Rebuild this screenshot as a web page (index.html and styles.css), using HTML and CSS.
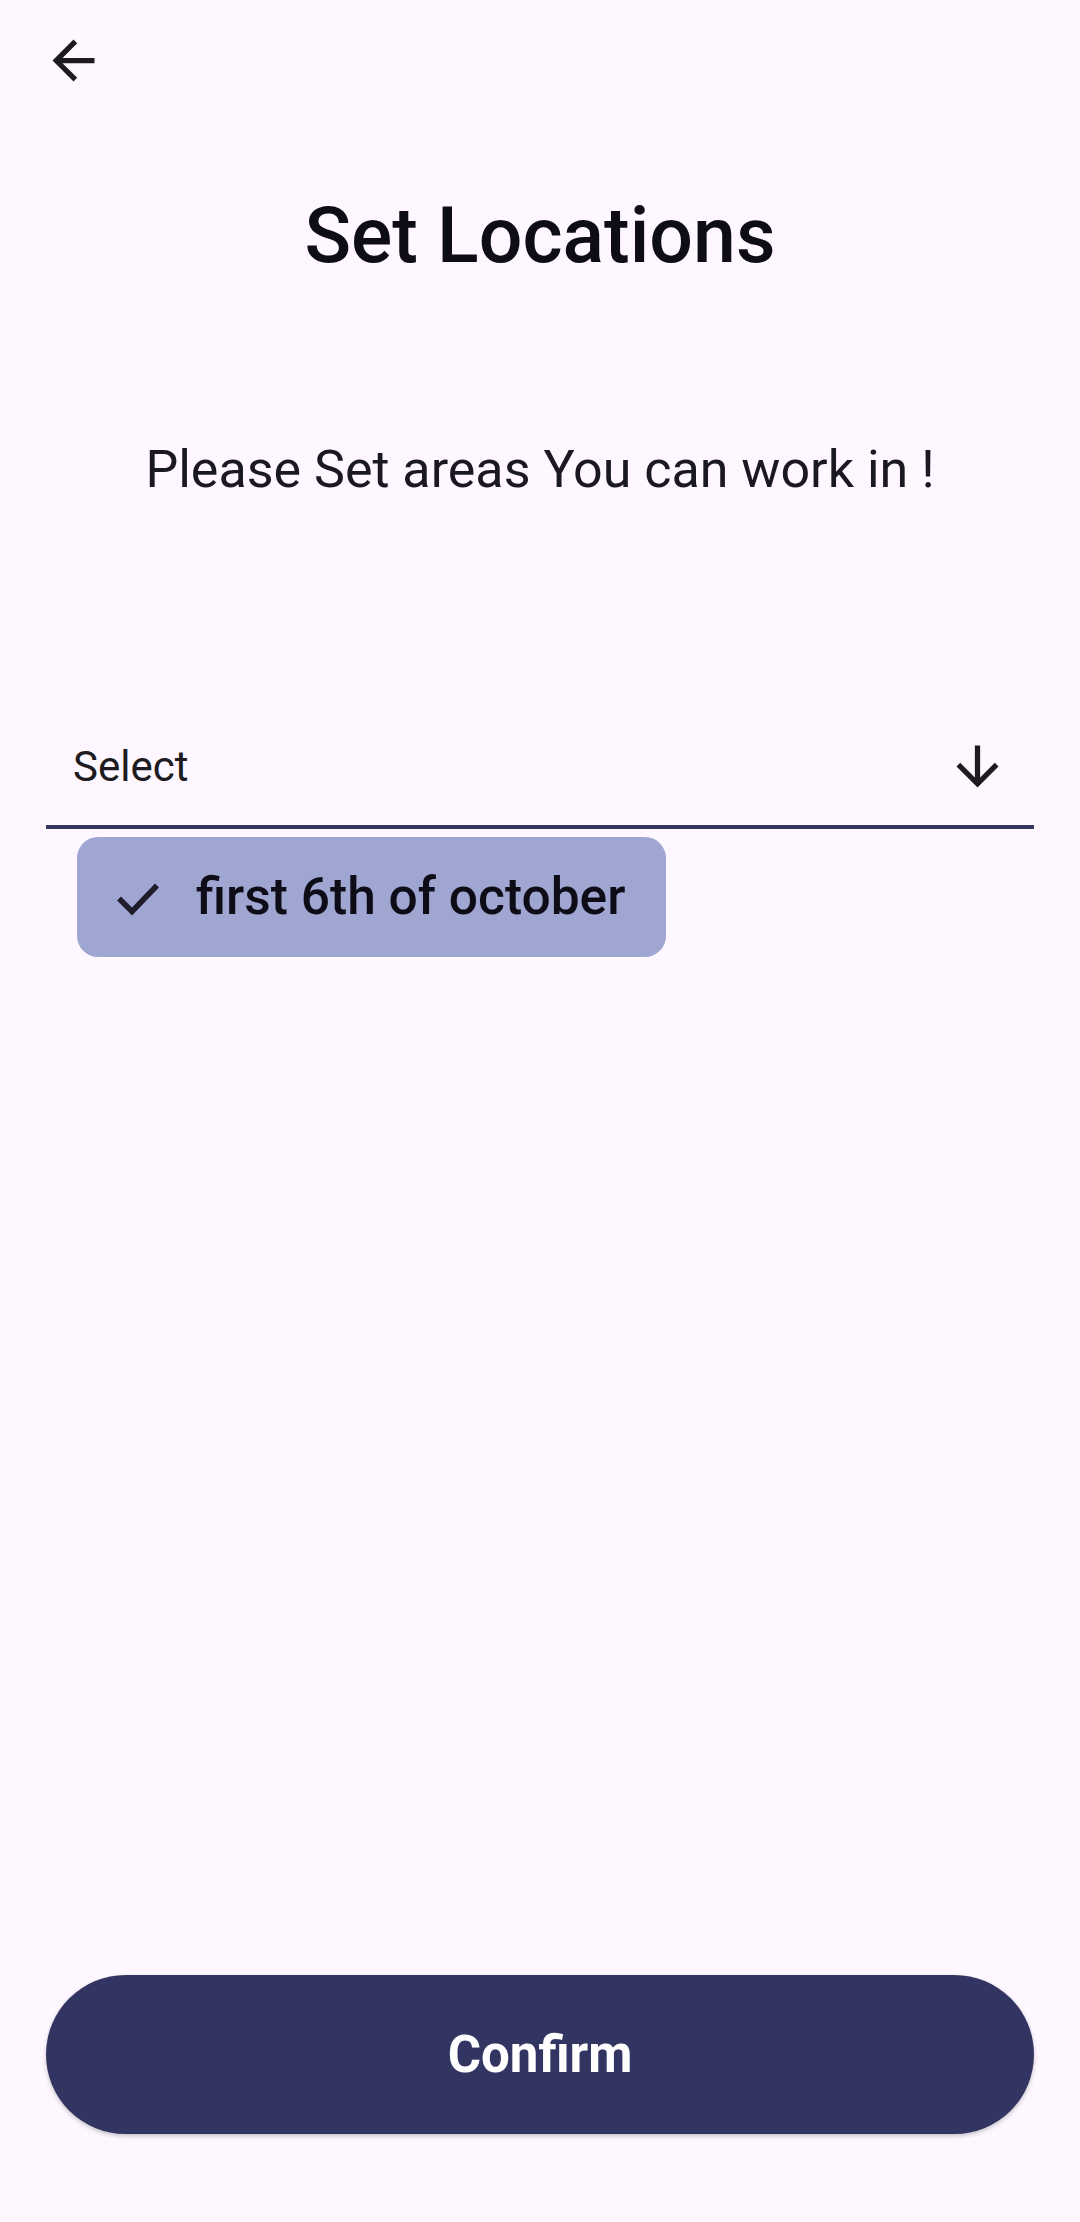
FILE: index.html
```html
<!DOCTYPE html>
<html lang="en">
<head>
<meta charset="utf-8">
<title>Set Locations</title>
<link rel="stylesheet" href="styles.css">
</head>
<body>
<div class="screen">
  <header class="topbar">
    <button class="icon-btn" aria-label="Back">
      <svg viewBox="0 0 24 24" width="63" height="63"><path d="M20 11H7.83l5.59-5.59L12 4l-8 8 8 8 1.41-1.41L7.83 13H20v-2z" fill="#1d1b20"/></svg>
    </button>
  </header>
  <main class="content">
    <h1 class="title">Set Locations</h1>
    <p class="subtitle">Please Set areas You can work in !</p>
    <div class="field">
      <div class="field-row">
        <span class="field-label">Select</span>
        <svg class="field-icon" viewBox="0 0 24 24" width="63" height="63"><path d="M20 12l-1.41-1.41L13 16.17V4h-2v12.17l-5.58-5.59L4 12l8 8 8-8z" fill="#1d1b20"/></svg>
      </div>
      <div class="field-line"></div>
    </div>
    <div class="chips">
      <div class="chip">
        <svg class="chip-icon" viewBox="0 0 57 57" width="57" height="57"><polyline points="10,29.5 23,42.5 48,16.5" fill="none" stroke="#1f1d2c" stroke-width="5.5"/></svg>
        <span class="chip-text">first 6th of october</span>
      </div>
    </div>
  </main>
  <footer class="footer">
    <button class="confirm">Confirm</button>
  </footer>
</div>
</body>
</html>
```
FILE: styles.css
```css
* { box-sizing: border-box; }
html, body { margin: 0; padding: 0; }
body {
  background: #fef7ff;
  font-family: Roboto, "Noto Sans", "Liberation Sans", sans-serif;
  color: #1d1b20;
}
.screen {
  min-height: 2222px;
  display: flex;
  flex-direction: column;
}
.topbar {
  padding: 29px 0 0 42px;
  display: flex;
}
.icon-btn {
  border: 0;
  background: transparent;
  padding: 0;
  width: 63px;
  height: 63px;
  display: block;
}
.icon-btn svg { display: block; }
.content {
  flex: 1;
  display: flex;
  flex-direction: column;
}
.title {
  margin: 99px 0 0;
  text-align: center;
  font-size: 77px;
  line-height: 90px;
  font-weight: 500;
  color: #0e0c17;
}
.subtitle {
  margin: 158px 0 0;
  text-align: center;
  font-size: 52px;
  line-height: 62px;
  font-weight: 400;
  color: #1a1822;
}
.field {
  margin: 234px 46px 0;
}
.field-row {
  height: 63px;
  display: flex;
  align-items: center;
  justify-content: space-between;
  padding: 0 25px 0 27px;
}
.field-label {
  font-size: 42px;
  line-height: 49px;
  color: #1d1b20;
}
.field-icon { display: block; }
.field-line {
  margin-top: 27px;
  height: 4px;
  background: #34385f;
}
.chips {
  margin: 8px 0 0 77px;
  display: flex;
}
.chip {
  height: 120px;
  background: #a0a6d2;
  border-radius: 21px;
  display: flex;
  align-items: center;
  padding: 0 41px 0 32px;
  gap: 30px;
}
.chip-icon { display: block; }
.chip-text {
  font-size: 51.5px;
  font-weight: 500;
  color: #0e0c17;
  line-height: 62px;
}
.footer {
  padding: 0 46px 88px;
}
.confirm {
  width: 100%;
  height: 159px;
  border: 0;
  border-radius: 80px;
  background: #323562;
  color: #ffffff;
  font-family: Roboto, "Noto Sans", "Liberation Sans", sans-serif;
  font-size: 51px;
  font-weight: 700;
  box-shadow: 0 2px 4px rgba(0, 0, 0, 0.22);
  display: block;
}
```
